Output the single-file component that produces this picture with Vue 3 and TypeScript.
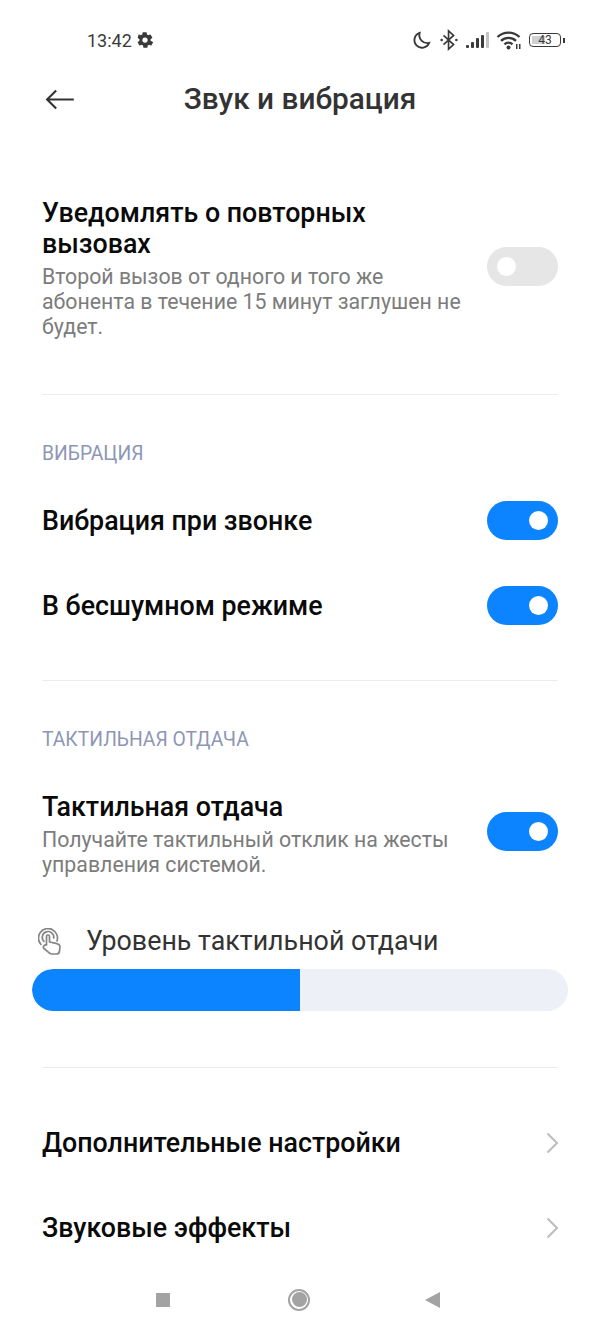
<script setup lang="ts">
const statusBars: number[] = [3, 6, 10, 13]
</script>

<template>
  <div class="screen">
    <header class="status">
      <div class="status-left">
        <span class="time">13:42</span>
        <svg class="gear" viewBox="0 0 24 24"><path fill="#3a3a3a" fill-rule="evenodd" d="M19.4 13a7.500 7.500 0 0 0 0-2l2.200-1.700a.6.6 0 0 0 .1-.7l-2.100-3.600a.6.6 0 0 0-.7-.2l-2.600 1a7.500 7.500 0 0 0-1.700-1l-.4-2.700a.6.6 0 0 0-.6-.5h-4.200a.6.600 0 0 0-.6.500l-.4 2.700a7.500 7.500 0 0 0-1.700 1l-2.600-1a.6.600 0 0 0-.7.2L2.300 8.600a.6.600 0 0 0 .1.7L4.600 11a7.500 7.500 0 0 0 0 2l-2.200 1.700a.6.600 0 0 0-.1.7l2.100 3.600c.1.300.4.300.7.200l2.600-1c.5.400 1.100.7 1.700 1l.4 2.700c0 .3.300.5.600.5h4.200c.3 0 .6-.2.600-.5l.4-2.700c.6-.3 1.200-.6 1.700-1l2.600 1c.3.100.6 0 .7-.2l2.100-3.600a.6.600 0 0 0-.1-.7zM12 15.500a3.500 3.500 0 1 1 0-7 3.500 3.500 0 0 1 0 7z"/></svg>
      </div>
      <div class="status-right">
        <svg class="ic-moon" viewBox="0 0 20 20"><path fill="none" stroke="#3a3a3a" stroke-width="2" d="M8 2a8 8 0 1 0 10 10.500A8.500 8.500 0 0 1 8 2z"/></svg>
        <svg class="ic-bt" viewBox="0 0 20 24"><path fill="none" stroke="#3a3a3a" stroke-width="1.800" d="M4 7l11 10-5.500 5V2L15 7 4 17"/><circle cx="2" cy="12" r="1.400" fill="#3a3a3a"/><circle cx="18" cy="12" r="1.400" fill="#3a3a3a"/></svg>
        <div class="signal">
          <i v-for="(h, n) in statusBars" :key="n" class="sbar" :style="{ height: h + 'px' }"></i>
          <i class="sbar sbar-off"></i>
        </div>
        <svg class="ic-wifi" viewBox="0 0 26 20"><path fill="none" stroke="#3a3a3a" stroke-width="2.400" d="M1.500 7a16 16 0 0 1 22 0M5 10.800a11 11 0 0 1 15 0M8.500 14.300a6 6 0 0 1 8 0"/><circle cx="12.500" cy="17.500" r="2" fill="#3a3a3a"/><path fill="#3a3a3a" d="M20 14h1.500v5H20zM23 14h1.500v5H23z"/></svg>
        <div class="battery">
          <div class="cell"><span class="cell-fill"></span><span class="cell-num">43</span></div>
          <i class="nub"></i>
        </div>
      </div>
    </header>

    <div class="nav">
      <svg class="back" viewBox="0 0 30 22"><path fill="none" stroke="#333" stroke-width="2.200" d="M30 11H2M11.500 1.500 2 11l9.500 9.500"/></svg>
      <h1>Звук и вибрация</h1>
    </div>

    <section class="group first">
      <div class="row">
        <div class="text">
          <div class="title">Уведомлять о повторных вызовах</div>
          <div class="desc">Второй вызов от одного и того же абонента в течение 15 минут заглушен не будет.</div>
        </div>
        <div class="toggle off lifted"><i></i></div>
      </div>
    </section>

    <hr />

    <section class="group">
      <div class="label">ВИБРАЦИЯ</div>
      <div class="row simple">
        <div class="title">Вибрация при звонке</div>
        <div class="toggle"><i></i></div>
      </div>
      <div class="row simple">
        <div class="title">В бесшумном режиме</div>
        <div class="toggle"><i></i></div>
      </div>
    </section>

    <hr />

    <section class="group">
      <div class="label">ТАКТИЛЬНАЯ ОТДАЧА</div>
      <div class="row haptic">
        <div class="text">
          <div class="title">Тактильная отдача</div>
          <div class="desc">Получайте тактильный отклик на жесты управления системой.</div>
        </div>
        <div class="toggle"><i></i></div>
      </div>
      <div class="level">
        <svg class="touch" viewBox="0 0 23 27"><g fill="none" stroke="#858585" stroke-width="1.700" stroke-linecap="round" stroke-linejoin="round"><path d="M3 16.500A9.500 9.500 0 1 1 19 13"/><path d="M6 13.500A5.800 5.800 0 1 1 15.800 10"/><path d="M8.500 17V8.500c0-2 3-2 3 0V14l6.500 1.300c2.500.5 4 1.700 4 3.700l-.6 4.500c-.3 1.500-1.200 2.500-2.800 2.500h-5c-1.200 0-2-.5-2.700-1.400L5.500 20c-1-1.600 1.300-3.800 3-3"/></g></svg>
        <span>Уровень тактильной отдачи</span>
      </div>
      <div class="slider"><div class="slider-fill"></div></div>
    </section>

    <hr class="hr3" />

    <section class="links">
      <div class="row link">
        <div class="title">Дополнительные настройки</div>
        <svg class="chev" viewBox="0 0 12 22"><path fill="none" stroke="#bdbdbd" stroke-width="2" d="M1.500 1.500 11 11l-9.500 9.500"/></svg>
      </div>
      <div class="row link">
        <div class="title">Звуковые эффекты</div>
        <svg class="chev" viewBox="0 0 12 22"><path fill="none" stroke="#bdbdbd" stroke-width="2" d="M1.500 1.500 11 11l-9.500 9.500"/></svg>
      </div>
    </section>

    <footer class="navbar">
      <i class="nav-square"></i>
      <i class="nav-circle"><b></b></i>
      <i class="nav-tri"></i>
    </footer>
  </div>
</template>

<style>
html, body { margin: 0; background: #fff; }
</style>

<style scoped>
.screen {
  width: 600px;
  height: 1333px;
  background: #fff;
  font-family: Roboto, "Noto Sans", sans-serif;
  color: #000;
  overflow: hidden;
  display: flex;
  flex-direction: column;
}
.status {
  height: 40px;
  margin-top: 20px;
  padding: 0 35px 0 87px;
  display: flex;
  align-items: center;
  justify-content: space-between;
  flex: none;
}
.status-left { display: flex; align-items: center; gap: 4px; }
.time { font-size: 18px; color: #3a3a3a; }
.gear { width: 18px; height: 18px; }
.status-right { display: flex; align-items: center; }
.ic-moon { width: 19px; height: 19px; margin-right: 2px; margin-left: -2px; }
.ic-bt { width: 20px; height: 22px; margin-left: 6px; }
.signal { display: flex; align-items: flex-end; gap: 2px; height: 16px; margin-left: 7px; }
.sbar { width: 3px; background: #3a3a3a; border-radius: 1px; display: block; }
.sbar-off { height: 16px; background: #c4c4c4; }
.ic-wifi { width: 26px; height: 20px; margin-left: 7px; }
.battery { display: flex; align-items: center; margin-left: 7px; }
.cell {
  width: 32px; height: 14px; box-sizing: border-box; border: 1.500px solid #3a3a3a; border-radius: 4px;
  position: relative; display: flex; align-items: center; justify-content: center;
}
.cell-fill { position: absolute; left: 2px; top: 2px; bottom: 2px; width: 13px; background: #d0d0d0; }
.cell-num { position: relative; font-size: 12px; color: #3a3a3a; }
.nub { width: 2px; height: 5px; background: #3a3a3a; margin-left: 2px; display: block; }

.nav {
  height: 76px;
  flex: none;
  position: relative;
  display: flex;
  align-items: center;
  justify-content: center;
}
.back { position: absolute; left: 45px; top: 29px; width: 29px; height: 21px; }
h1 { margin: 0; font-size: 29.800px; font-weight: 500; color: #333; }

.group { padding: 0 42px; flex: none; }
.first { padding-top: 62px; padding-bottom: 55px; }
.row { display: flex; align-items: center; justify-content: space-between; }
.text { width: 425px; }
.title { font-size: 26.800px; font-weight: 500; line-height: 31px; color: #0a0a0a; }
.desc { font-size: 21.300px; line-height: 25px; color: #7c7c7c; margin-top: 4px; }
hr { border: 0; height: 1px; background: #ececec; margin: 0 42px; flex: none; }
.label { font-size: 19.300px; line-height: 22px; color: #8d96b5; padding-top: 48px; margin-bottom: 14px; }
.simple { height: 85px; }
.simple + .simple { margin-bottom: 31px; }
.toggle {
  width: 71px; height: 39px; border-radius: 20px; background: #0d84ff;
  display: flex; align-items: center; justify-content: flex-end; padding: 0 10px; box-sizing: border-box;
  flex: none;
  margin-bottom: 2px;
}
.toggle i { width: 19px; height: 19px; background: #fff; border-radius: 50%; display: block; }
.toggle.off { background: #e6e6e6; justify-content: flex-start; }
.toggle.lifted { margin-bottom: 4px; }
.haptic { margin-top: 41px; }
.haptic .toggle { margin-bottom: 6px; }
.level { display: flex; align-items: center; height: 40px; margin-top: 44px; margin-left: -4px; }
.touch { width: 23px; height: 27px; }
.level span { font-size: 26.800px; color: #333; margin-left: 25px; }
.slider { margin: 8px -10px 0; height: 42px; border-radius: 21px; background: #edf0f6; overflow: hidden; }
.slider-fill { width: 268px; height: 100%; background: #0d84ff; border-radius: 21px 0 0 21px; }
.hr3 { margin-top: 56px; }
.links { padding: 33px 42px 0; flex: none; }
.link { height: 85px; }
.chev { width: 12px; height: 22px; margin-bottom: 2px; }
.navbar { flex: 1; display: flex; justify-content: center; align-items: center; padding-bottom: 5px; padding-right: 4px; }
.nav-square { width: 14px; height: 14px; background: #a3a3a3; display: block; margin-right: 118px; }
.nav-circle { width: 22px; height: 22px; border: 2px solid #a3a3a3; border-radius: 50%; display: flex; align-items: center; justify-content: center; box-sizing: border-box; }
.nav-circle b { width: 15px; height: 15px; background: #a3a3a3; border-radius: 50%; display: block; }
.nav-tri { width: 0; height: 0; border-style: solid; border-width: 8px 15px 8px 0; border-color: transparent #a3a3a3 transparent transparent; display: block; margin-left: 115px; }
</style>
